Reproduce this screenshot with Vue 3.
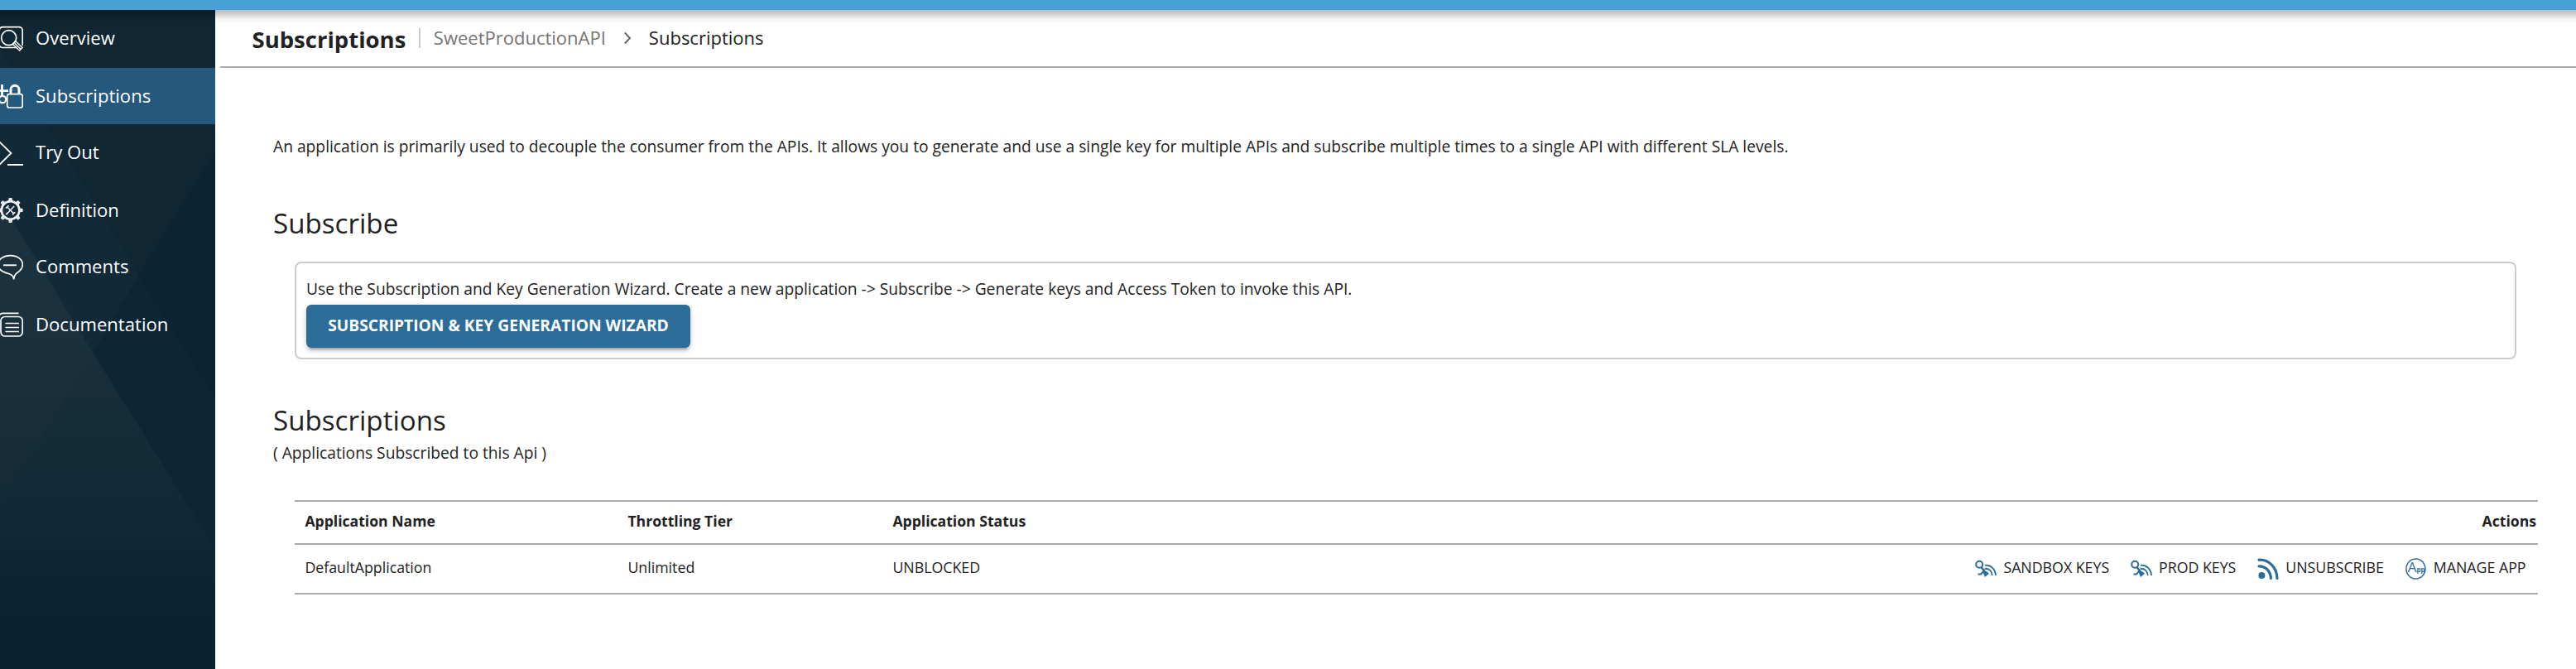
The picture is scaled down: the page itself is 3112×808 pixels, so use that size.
<script setup>
const menu = [
  { id: 'overview', label: 'Overview' },
  { id: 'subscriptions', label: 'Subscriptions', active: true },
  { id: 'tryout', label: 'Try Out' },
  { id: 'definition', label: 'Definition' },
  { id: 'comments', label: 'Comments' },
  { id: 'documentation', label: 'Documentation' }
]
const subscriptions = [
  { name: 'DefaultApplication', tier: 'Unlimited', status: 'UNBLOCKED' }
]
const actions = [
  { icon: 'keys', label: 'SANDBOX KEYS' },
  { icon: 'keys', label: 'PROD KEYS' },
  { icon: 'feed', label: 'UNSUBSCRIBE' },
  { icon: 'app', label: 'MANAGE APP' }
]
const teeth = [0, 45, 90, 135, 180, 225, 270, 315]
</script>

<template>
  <div class="page">
    <div class="topbar"></div>
    <div class="body">
      <nav class="sidebar">
        <svg class="facets" viewBox="0 0 260 796" preserveAspectRatio="none">
          <defs>
            <linearGradient id="facetUpper" gradientUnits="userSpaceOnUse" x1="0" y1="240" x2="0" y2="600">
              <stop offset="0" stop-color="#1c333f" />
              <stop offset="0.5" stop-color="#1a303c" />
              <stop offset="1" stop-color="#142a37" />
            </linearGradient>
            <linearGradient id="facetLower" gradientUnits="userSpaceOnUse" x1="0" y1="400" x2="0" y2="740">
              <stop offset="0" stop-color="#1a303c" />
              <stop offset="0.35" stop-color="#142b38" />
              <stop offset="0.68" stop-color="#112836" />
              <stop offset="0.75" stop-color="#0e2633" />
              <stop offset="1" stop-color="#0b2331" />
            </linearGradient>
          </defs>
          <rect width="260" height="796" fill="#102733" />
          <path d="M0 46 260 470V796H0Z" fill="#122938" />
          <path d="M260 170 167 321 260 470Z" fill="#0b2332" />
          <path d="M167 321 260 470V660L113 415Z" fill="#0d2635" />
          <path d="M0 230 113 415 0 596Z" fill="url(#facetUpper)" />
          <path d="M113 415 262 655V796H0V596Z" fill="url(#facetLower)" />
        </svg>
        <a v-for="m in menu" :key="m.id" class="item" :class="[m.id, { active: m.active }]">
          <svg class="micon" width="28" height="32" viewBox="0 0 28 32" fill="none" stroke="#fff" stroke-width="1.7">
            <template v-if="m.id === 'overview'">
              <path d="M21 26.5H3a4 4 0 0 1-4-4V6a4.500 4.500 0 0 1 4-4.300H23a4.200 4.200 0 0 1 4.200 4.200V24" />
              <circle cx="10.700" cy="14.700" r="9" />
              <path d="M18.500 18.500 27 26.500 23.600 30 15.200 22.200ZM17 20.400 25 28.200" stroke-width="1.400" />
            </template>
            <template v-else-if="m.id === 'subscriptions'">
              <rect x="8.700" y="13.600" width="18.500" height="16.400" rx="2.600" />
              <path d="M13 13.500V8.300a5 5 0 0 1 10 0V13.500" stroke-width="3" />
              <path d="M2.500 2V15M-1 9.700H10" stroke-width="2.800" />
              <circle cx="3" cy="20" r="4.200" stroke-width="2.200" />
            </template>
            <template v-else-if="m.id === 'tryout'">
              <path d="M-1 2 13.400 16-1 30.200M9 30H28" stroke-width="1.900" />
            </template>
            <g v-else-if="m.id === 'definition'" transform="translate(12.600 15.900)" stroke="#eef1f4">
              <circle r="10.800" stroke-width="2.600" />
              <path v-for="a in teeth" :key="a" d="M-2.400-11.500-1.900-15H1.900L2.400-11.500Z" fill="#eef1f4" stroke="none" :transform="`rotate(${a})`" />
              <path d="M-3.500 3.500 4.500-4.800M-3.200-3.200 3.800 3.800" stroke-width="1.500" />
              <path d="M-5.800-3.200A2.700 2.700 0 0 0-2.600-5.900M3 5.700A2.500 2.500 0 0 1 5.800 3M-5.300 5.300-3.200 3.200" stroke-width="1.800" />
            </g>
            <template v-else-if="m.id === 'comments'">
              <path d="M16.700 30.500C16.400 26.500 14 24.500 10.500 23.500 3 21.500-2.400 17.500-2.400 12.500-2.400 6 4.500 1.700 12.500 1.700S27.300 6 27.300 12.500C27.300 17 24.500 20 21 22.200 17.500 24.500 16.700 27 16.700 30.500Z" />
              <path d="M4 13.300H20" stroke-width="1.900" />
            </template>
            <template v-else>
              <rect x="1" y="6.500" width="26.200" height="23.500" rx="5" />
              <path d="M-1 5C0 3 2 2.300 4 2.300H22.500" />
              <path d="M6.500 14.500H23M6.500 19.500H23M6.500 24.500H23" />
            </template>
          </svg>
          <span class="mlabel">{{ m.label }}</span>
        </a>
      </nav>

      <main class="main">
        <header class="head">
          <h1>Subscriptions</h1>
          <span class="divider"></span>
          <a class="crumb muted">SweetProductionAPI</a>
          <svg class="chev" width="10" height="16" viewBox="0 0 10 16"><path d="M1.800 1.500 8 8 1.800 14.500" fill="none" stroke="#666" stroke-width="2" /></svg>
          <span class="crumb">Subscriptions</span>
        </header>

        <section class="content">
          <p class="text">An application is primarily used to decouple the consumer from the APIs. It allows you to generate and use a single key for multiple APIs and subscribe multiple times to a single API with different SLA levels.</p>
          <h2 class="first">Subscribe</h2>
          <div class="wizard">
            <p class="text">Use the Subscription and Key Generation Wizard. Create a new application -&gt; Subscribe -&gt; Generate keys and Access Token to invoke this API.</p>
            <button class="btn">SUBSCRIPTION &amp; KEY GENERATION WIZARD</button>
          </div>
          <h2 class="second">Subscriptions</h2>
          <p class="text sub">( Applications Subscribed to this Api )</p>

          <div class="table">
            <div class="row hrow">
              <span>Application Name</span><span>Throttling Tier</span><span>Application Status</span><span class="right">Actions</span>
            </div>
            <div v-for="s in subscriptions" :key="s.name" class="row">
              <span>{{ s.name }}</span><span>{{ s.tier }}</span><span>{{ s.status }}</span>
              <div class="actions">
                <a v-for="a in actions" :key="a.label" class="action">
                  <svg width="26" height="26" viewBox="0 0 26 26" fill="none" stroke="#2b6d98">
                    <template v-if="a.icon === 'keys'">
                      <circle cx="5.200" cy="7.800" r="4" stroke-width="2" />
                      <path d="M7.500 11 13.500 18.500" stroke-width="2.600" />
                      <path d="M3.500 19.500H7L10.500 15.500" stroke-width="2" />
                      <path d="M9.500 17 12 23 17 18.800 14.500 16.500Z" fill="#2b6d98" stroke="none" />
                      <path d="M11.800 8.700C19 8 24.500 13 25 21" stroke-width="1.900" />
                      <path d="M11.500 12.800C17 12.600 20.500 16 20.700 21" stroke-width="1.900" />
                    </template>
                    <template v-else-if="a.icon === 'feed'">
                      <circle cx="5.400" cy="21" r="4" fill="#2b6d98" stroke="none" />
                      <path d="M2 2.200C14 1.800 23.500 11 24 24.500" stroke-width="3.200" stroke-linecap="round" />
                      <path d="M2 9.800C10 9.600 16 15.800 16.400 24.500" stroke-width="3.200" stroke-linecap="round" />
                    </template>
                    <template v-else>
                      <ellipse cx="12.400" cy="13" rx="11.500" ry="12" stroke-width="1.500" />
                      <text class="glyph" x="2.800" y="17" font-size="17">A</text>
                      <text class="glyph" x="13.400" y="16.500" font-size="8" font-weight="700">pp</text>
                    </template>
                  </svg>
                  <span>{{ a.label }}</span>
                </a>
              </div>
            </div>
          </div>
        </section>
      </main>
    </div>
  </div>
</template>

<style>
html, body { margin: 0; background: #fff; }
</style>

<style scoped>
.page { width: 3112px; height: 808px; overflow: hidden; display: flex; flex-direction: column; background: #fff; color: #222; font-family: "Open Sans", sans-serif; }
.topbar { flex: none; height: 12px; margin: 0 -24px; background: #48a0d7; position: relative; z-index: 5; box-shadow: 0 4px 8px -2px rgba(0,0,0,.2), 0 8px 10px rgba(0,0,0,.14), 0 2px 20px rgba(0,0,0,.12); }
.body { flex: 1; display: flex; min-height: 0; }
h1, h2, p { margin: 0; white-space: nowrap; }

.sidebar { width: 260px; flex: none; position: relative; overflow: hidden; background: #102733; display: flex; flex-direction: column; }
.facets { position: absolute; inset: 0; width: 260px; height: 796px; }
.item { position: relative; flex: none; height: 69px; display: flex; align-items: center; color: #fff; }
.item.overview, .item.tryout, .item.documentation { height: 70px; }
.item.subscriptions, .item.definition { height: 68px; }
.item.active { background: #24587c; }
.micon { flex: none; margin-right: 15px; }
.mlabel { font-size: 22.100px; line-height: 30px; margin-bottom: 2px; white-space: nowrap; }
.overview .mlabel, .tryout .mlabel, .comments .mlabel { margin-bottom: 4px; }

.main { flex: 1; margin-left: 6px; display: flex; flex-direction: column; }
.head { box-sizing: border-box; height: 70px; border-bottom: 2px solid #aaa; padding-left: 38.500px; display: flex; align-items: center; }
h1 { font-size: 27.500px; font-weight: 700; line-height: 36px; padding-top: 3px; }
.divider { width: 2px; height: 24px; background: #ccc; margin: 0 15.500px 0 16px; }
.crumb { font-size: 22px; line-height: 30px; margin-bottom: 2px; white-space: nowrap; }
.muted { color: #757575; }
.chev { flex: none; margin: 0 21px; }

.content { padding: 85px 46px 0 64px; display: flex; flex-direction: column; }
.text { font-size: 19.230px; line-height: 20px; }
h2 { font-size: 33.150px; font-weight: 400; line-height: 40px; }
.first { margin-top: 63px; }
.second { margin-top: 54px; }
.sub { margin-top: 9px; }
.wizard { box-sizing: border-box; height: 118px; margin: 26px 26px 0; border: 2px solid #ccc; border-radius: 8px; padding: 21px 12px 11px; display: flex; flex-direction: column; align-items: flex-start; }
.btn { box-sizing: border-box; width: 464px; height: 52px; margin-top: 9px; padding: 0 0 2px; border: 0; border-radius: 6px; background: #2b6d98; color: #fff; font: 700 19.220px/50px "Open Sans", sans-serif; white-space: nowrap; text-align: center; box-shadow: 0 6px 2px -4px rgba(0,0,0,.2), 0 4px 4px rgba(0,0,0,.14), 0 2px 10px rgba(0,0,0,.12); }
.table { margin: 47px 0 0 26px; border-top: 2px solid #aaa; font-size: 17.750px; }
.row { display: grid; grid-template-columns: 390px 320px 300px 1fr; align-items: center; height: 54px; padding: 0 0 4px 12.400px; border-bottom: 2px solid #aaa; line-height: 24px; }
.hrow { height: 46px; font-size: 17.600px; font-weight: 700; }
.right { text-align: right; padding-right: 2px; }
.actions { display: flex; justify-content: flex-end; gap: 25.900px; padding-right: 14.500px; }
.action { display: flex; align-items: center; gap: 8px; white-space: nowrap; height: 24px; }
.action svg { flex: none; margin-top: 4px; overflow: visible; }
.glyph { font-family: "Open Sans", sans-serif; fill: #2b6d98; stroke: none; }
</style>
